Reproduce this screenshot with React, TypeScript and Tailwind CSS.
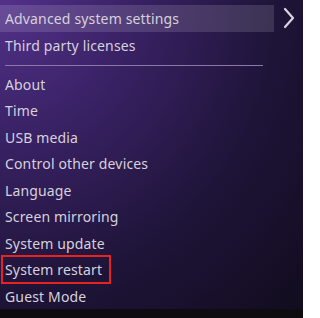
import React from 'react';

const items = [
    'About',
    'Time',
    'USB media',
    'Control other devices',
    'Language',
    'Screen mirroring',
    'System update',
    'System restart',
    'Guest Mode',
];

function Chevron() {
    return (
        <svg width="14" height="22" viewBox="0 0 14 22" fill="none" className="shrink-0">
            <polyline points="3,2 11,11 3,20" stroke="#d9d4de" strokeWidth="2.2" strokeLinecap="round" strokeLinejoin="round" />
        </svg>
    );
}

export default function App() {
    return (
        <div
            className="w-[303px] h-[318px] overflow-hidden flex flex-col text-[#d6d1dc] text-[14px] tracking-[0.15px] bg-[radial-gradient(ellipse_at_0%_0%,#53318a_0%,#3a2266_30%,#1e1438_65%,#110c1d_100%)]"
            style={{ fontFamily: '"Noto Sans", "Open Sans", sans-serif' }}
        >
            <div className="flex items-center pt-[5px]">
                {/* Focused row */}
                <div className="w-[274px] h-[27px] flex items-center pl-[5px] bg-white/[0.13]">
                    Advanced system settings
                </div>
                <div className="flex-1 flex justify-center -mt-[1px]">
                    <Chevron />
                </div>
            </div>
            <div className="h-[26px] flex items-center pl-[5px]">Third party licenses</div>

            {/* Divider */}
            <div className="mt-[7px] ml-[5px] w-[258px] h-px bg-[#8c78a6]" />

            <div className="mt-[4.75px] flex flex-col">
                {items.map((label) => (
                    <div key={label} className="relative h-[26.5px] flex items-center pl-[5px]">
                        {label}
                        {label === 'System restart' && (
                            <span className="absolute left-[1px] -top-[1.5px] w-[110px] h-[29px] border-2 border-[#e8231f]" />
                        )}
                    </div>
                ))}
            </div>

            <div className="flex-1 bg-[#0e0c11]" />
        </div>
    );
}
